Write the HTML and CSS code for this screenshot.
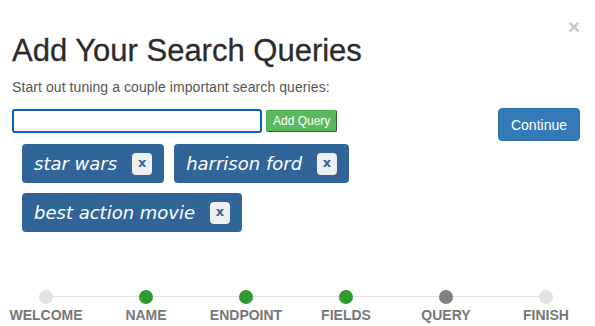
FILE: index.html
```html
<!DOCTYPE html>
<html lang="en">
<head>
    <meta charset="UTF-8">
    <meta name="viewport" content="width=device-width, initial-scale=1.0">
    <title>Add Your Search Queries</title>
    <link rel="stylesheet" href="styles.css">
</head>
<body>
    <div class="modal">
        <button class="close" type="button">&times;</button>
        <h1 class="title">Add Your Search Queries</h1>
        <p class="lead">Start out tuning a couple important search queries:</p>
        <div class="queryRow">
            <form class="queryForm">
                <input type="text" class="queryInput">
                <button type="submit" class="addBtn">Add Query</button>
            </form>
            <button type="button" class="continueBtn">Continue</button>
        </div>
        <ul class="tags">
            <li class="tag"><span>star wars</span><button class="tagX">x</button></li>
            <li class="tag"><span>harrison ford</span><button class="tagX">x</button></li>
            <li class="tag"><span>best action movie</span><button class="tagX">x</button></li>
        </ul>
        <ol class="steps">
            <li class="step"><span class="dot"></span>WELCOME</li>
            <li class="step done"><span class="dot"></span>NAME</li>
            <li class="step done"><span class="dot"></span>ENDPOINT</li>
            <li class="step done"><span class="dot"></span>FIELDS</li>
            <li class="step current"><span class="dot"></span>QUERY</li>
            <li class="step"><span class="dot"></span>FINISH</li>
        </ol>
    </div>
</body>
</html>
```

FILE: styles.css
```css
body {
    margin: 0;
    background-color: #fff;
    font-family: "Liberation Sans", Arial, sans-serif;
    color: #333;
}
.modal {
    position: relative;
    height: 326px;
    box-sizing: border-box;
    padding: 34px 15px 3px 12px;
    display: flex;
    flex-direction: column;
    overflow: hidden;
}
.close {
    position: absolute;
    top: 16px;
    right: 15px;
    padding: 0;
    border: none;
    background: none;
    font-family: "Liberation Sans", Arial, sans-serif;
    font-size: 21px;
    font-weight: bold;
    line-height: 1;
    color: #c4cad1;
    cursor: pointer;
}
.title {
    margin: 0;
    font-size: 31px;
    font-weight: normal;
    line-height: 34px;
    color: #2b2b2b;
    -webkit-text-stroke: 0.3px #2b2b2b;
}
.lead {
    margin: 9px 0 0;
    font-size: 14px;
    line-height: 20px;
    letter-spacing: 0.08px;
    color: #555;
}
.queryRow {
    display: flex;
    justify-content: space-between;
    align-items: flex-start;
    margin-top: 11px;
}
.queryForm {
    display: flex;
    align-items: center;
    gap: 4px;
    margin: 1px 0 0;
}
.queryInput {
    width: 250px;
    height: 24px;
    box-sizing: border-box;
    border: 2px solid #0a60c8;
    border-radius: 3px;
    padding: 0 4px;
    font-size: 13px;
    outline: none;
    caret-color: #000;
}
.addBtn {
    height: 22px;
    padding: 0 6px;
    background-color: #5cb85c;
    color: #fff;
    border: 1px solid #4cae4c;
    border-right-color: #2b602b;
    border-bottom-color: #2b602b;
    border-radius: 2px;
    font-family: "Liberation Sans", Arial, sans-serif;
    font-size: 12px;
    cursor: pointer;
}
.continueBtn {
    height: 33px;
    padding: 0 12px;
    background-color: #337ab7;
    color: #fff;
    border: 1px solid #2e6da4;
    border-radius: 4px;
    font-family: "Liberation Sans", Arial, sans-serif;
    font-size: 14px;
    cursor: pointer;
}
.tags {
    list-style-type: none;
    margin: 3px 0 0;
    padding: 0 0 0 10px;
    width: 340px;
    display: flex;
    flex-wrap: wrap;
    gap: 10px;
}
.tag {
    display: flex;
    align-items: center;
    height: 39px;
    box-sizing: border-box;
    padding: 0 12px;
    background-color: #31659a;
    border-radius: 4px;
    color: #fff;
    font-family: "DejaVu Sans", Verdana, sans-serif;
    font-style: italic;
    font-size: 18px;
}
.tagX {
    width: 20px;
    height: 22px;
    margin-left: 15px;
    padding: 0 0 2px;
    border: none;
    border-radius: 4px;
    background-color: #eeeff1;
    color: #31659a;
    font-family: "DejaVu Sans", Verdana, sans-serif;
    font-size: 13px;
    font-weight: bold;
    cursor: pointer;
}
.steps {
    position: relative;
    list-style-type: none;
    margin: auto 0 0 -16px;
    padding: 0;
    width: 600px;
    display: grid;
    grid-template-columns: repeat(6, 1fr);
}
.steps::before {
    content: "";
    position: absolute;
    top: 6px;
    left: 50px;
    right: 50px;
    height: 1px;
    background-color: #e3e3e3;
}
.step {
    position: relative;
    display: flex;
    flex-direction: column;
    align-items: center;
    gap: 3px;
    font-size: 14px;
    font-weight: bold;
    line-height: 16px;
    color: #777;
}
.dot {
    width: 14px;
    height: 14px;
    border-radius: 50%;
    background-color: #e4e4e6;
}
.step.done .dot {
    background-color: #329a32;
}
.step.current .dot {
    background-color: #808080;
}
```
